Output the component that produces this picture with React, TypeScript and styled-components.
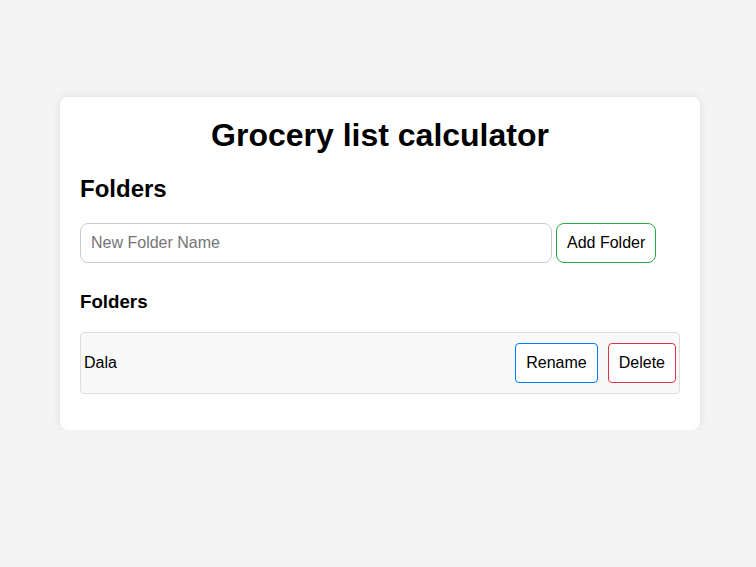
import React from "react";
import styled, { createGlobalStyle } from "styled-components";

const Global = createGlobalStyle`
  html, body {
    margin: 0;
    padding: 0;
    background: #f4f4f4;
    font-family: "Liberation Sans", Arial, sans-serif;
  }
`;

const Page = styled.div`
  display: flex;
  justify-content: center;
  padding: 97px 0 0 4px;
`;

const Card = styled.div`
  width: 600px;
  padding: 20px;
  background: #fff;
  border-radius: 8px;
  box-shadow: 0 0 10px rgba(0, 0, 0, 0.1);
`;

const Title = styled.h1`
  margin: 0 0 21.44px;
  font-size: 32px;
  font-weight: bold;
  text-align: center;
  color: #000;
`;

const SectionTitle = styled.h2`
  margin: 19.92px 0;
  font-size: 24px;
  font-weight: bold;
`;

const SubTitle = styled.h3`
  margin: 18.72px 0;
  font-size: 18.72px;
  font-weight: bold;
`;

const AddRow = styled.div`
  display: flex;
  align-items: center;
  gap: 4px;
  margin-bottom: 28px;
`;

const TextInput = styled.input`
  box-sizing: border-box;
  width: 472px;
  height: 40px;
  padding: 10px;
  font-size: 16px;
  font-family: "Liberation Sans", Arial, sans-serif;
  border: 1px solid #ccc;
  border-radius: 8px;
  outline: none;
  &::placeholder {
    color: #757575;
  }
`;

const Button = styled.button<{ $tone: string; $radius?: number }>`
  box-sizing: border-box;
  height: 40px;
  padding: 0 10px;
  font-size: 16px;
  font-family: "Liberation Sans", Arial, sans-serif;
  color: #000;
  background: #fff;
  border: 1px solid ${(p) => p.$tone};
  border-radius: ${(p) => p.$radius ?? 4}px;
  cursor: pointer;
`;

const List = styled.ul`
  list-style: none;
  margin: 16px 0;
  padding: 0;
`;

const Item = styled.li`
  display: flex;
  align-items: center;
  justify-content: space-between;
  padding: 10px 3px;
  background: #f9f9f9;
  border: 1px solid #ddd;
  border-radius: 4px;
  font-size: 16px;
`;

const Name = styled.span`
  color: #000;
`;

const Actions = styled.div`
  display: flex;
  gap: 10px;
`;

export default function App() {
  return (
    <>
      <Global />
      <Page>
        <Card>
          <Title>Grocery list calculator</Title>
          <SectionTitle>Folders</SectionTitle>
          <AddRow>
            <TextInput placeholder="New Folder Name" />
            <Button $tone="#28a745" $radius={8}>Add Folder</Button>
          </AddRow>
          <SubTitle>Folders</SubTitle>
          <List>
            <Item>
              <Name>Dala</Name>
              <Actions>
                <Button $tone="#007bff">Rename</Button>
                <Button $tone="#dc3545">Delete</Button>
              </Actions>
            </Item>
          </List>
        </Card>
      </Page>
    </>
  );
}
